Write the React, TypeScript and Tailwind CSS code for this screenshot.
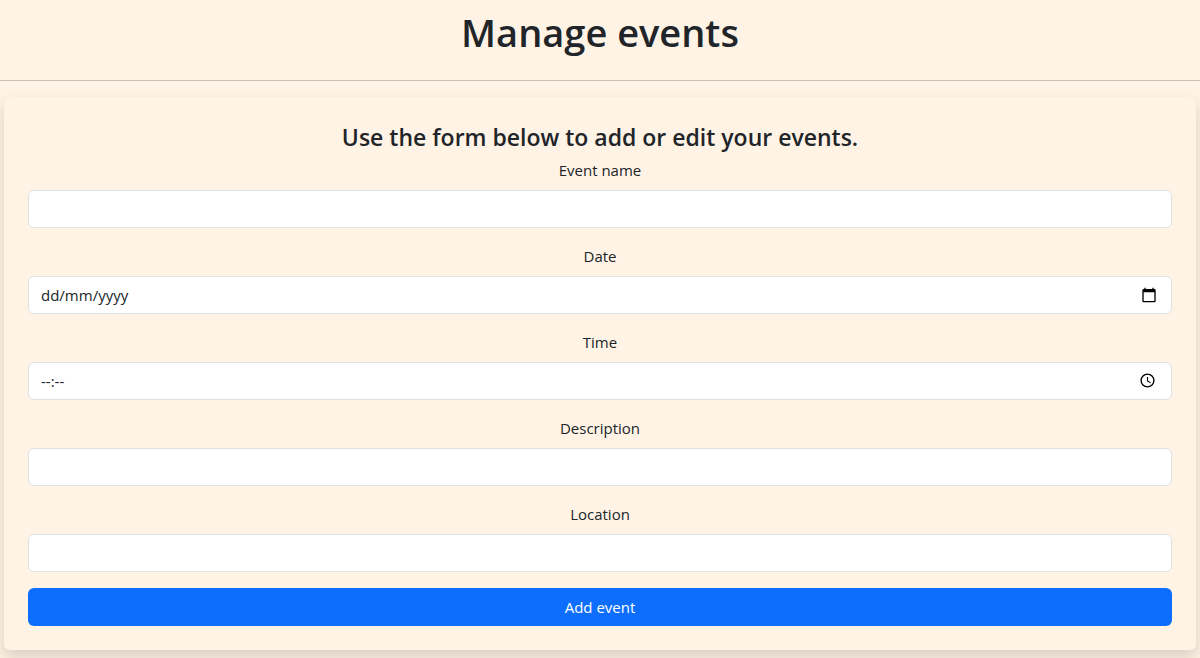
import { useId } from "react";
import type { ReactNode } from "react";

const controlClass =
  "block h-[38px] w-full rounded-md border border-[#dee2e6] bg-white px-3 text-[15px] leading-6 text-[#212529] outline-none placeholder:text-[#212529] placeholder:opacity-100 focus:border-[#86b7fe] focus:ring-4 focus:ring-[#0d6efd]/25";

function CalendarIcon() {
  return (
    <svg width="16" height="16" viewBox="0 0 24 24" fill="currentColor" aria-hidden="true">
      <path d="M20 3h-1V1h-2v2H7V1H5v2H4c-1.1 0-2 .9-2 2v16c0 1.1.9 2 2 2h16c1.1 0 2-.9 2-2V5c0-1.1-.9-2-2-2zm0 18H4V8h16v13z" />
    </svg>
  );
}

function ClockIcon() {
  return (
    <svg width="17" height="16" viewBox="0 0 17 16" fill="none" stroke="currentColor" aria-hidden="true">
      <circle cx="7.5" cy="7.5" r="6.4" strokeWidth="1.4" />
      <path d="M7.5 4v4l3.1 1.9" strokeWidth="1.1" />
    </svg>
  );
}

type FieldProps = {
  label: string;
  name: string;
  placeholder?: string;
  picker?: { label: string; icon: ReactNode };
};

function Field({ label, name, placeholder, picker }: FieldProps) {
  const id = useId();
  return (
    <div className="mb-4 flex flex-col gap-2">
      <label htmlFor={id} className="mx-auto text-[15px] leading-6">
        {label}
      </label>
      <div className="relative">
        <input id={id} name={name} type="text" placeholder={placeholder} className={controlClass} />
        {picker && (
          <button
            type="button"
            aria-label={picker.label}
            className="absolute inset-y-0 right-[15px] flex items-center text-black"
          >
            {picker.icon}
          </button>
        )}
      </div>
    </div>
  );
}

export default function App() {
  return (
    <div className="min-h-screen overflow-hidden bg-[#fff3e5] pb-2 font-['Open_Sans','Noto_Sans',sans-serif] text-[#212529]">
      <header className="border-b border-[#c9bfb7] pt-2 pb-6">
        <h1 className="text-center text-[38px] leading-[48px] font-semibold">Manage events</h1>
      </header>
      <main className="mx-1 mt-4 rounded-md bg-[#fff3e5] p-6 shadow-[0_8px_16px_rgba(0,0,0,0.15)]">
        <h2 className="mb-[5px] text-center text-[23px] leading-8 font-semibold">
          Use the form below to add or edit your events.
        </h2>
        <form onSubmit={(e) => e.preventDefault()}>
          <Field label="Event name" name="name" />
          <Field
            label="Date"
            name="date"
            placeholder="dd/mm/yyyy"
            picker={{ label: "Choose date", icon: <CalendarIcon /> }}
          />
          <Field
            label="Time"
            name="time"
            placeholder="--:--"
            picker={{ label: "Choose time", icon: <ClockIcon /> }}
          />
          <Field label="Description" name="description" />
          <Field label="Location" name="location" />
          <button
            type="submit"
            className="block h-[38px] w-full rounded-md bg-[#0d6efd] text-[15px] leading-6 text-white hover:bg-[#0b5ed7]"
          >
            Add event
          </button>
        </form>
      </main>
    </div>
  );
}
